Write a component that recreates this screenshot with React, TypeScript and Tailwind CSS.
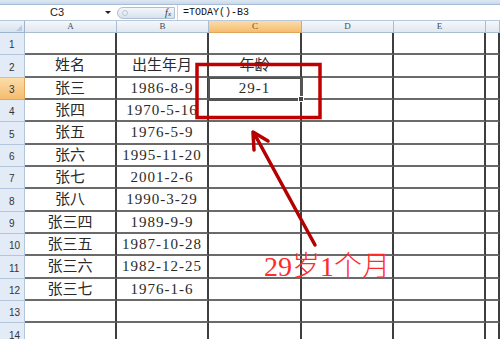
import React from 'react'

const rows: string[][] = [
  ['', '', ''],
  ['姓名', '出生年月', '年龄'],
  ['张三', '1986-8-9', '29-1'],
  ['张四', '1970-5-16', ''],
  ['张五', '1976-5-9', ''],
  ['张六', '1995-11-20', ''],
  ['张七', '2001-2-6', ''],
  ['张八', '1990-3-29', ''],
  ['张三四', '1989-9-9', ''],
  ['张三五', '1987-10-28', ''],
  ['张三六', '1982-12-25', ''],
  ['张三七', '1976-1-6', ''],
  ['', '', ''],
  ['', '', ''],
]

const cols = ['A', 'B', 'C', 'D', 'E', '']

const cellFont = { fontFamily: '"Liberation Serif", "Noto Sans CJK SC", serif' }

export default function App() {
  return (
    <div className="relative w-[500px] h-[339px] overflow-hidden bg-white">
      {/* ribbon edge */}
      <div className="h-[5px] bg-gradient-to-b from-[#dfe8f4] to-[#c9d8ea] border-b border-[#a7bcd6]" />

      {/* formula bar */}
      <div className="flex h-[16px] items-center border-b border-[#b7c8dc] bg-white">
        <div className="relative flex h-full w-[114px] items-center justify-center text-[11px] text-[#222]" style={{ fontFamily: '"Liberation Sans", sans-serif' }}>
          C3
          <span className="absolute right-[3px] top-[6px] h-0 w-0 border-x-[3px] border-t-[3px] border-x-transparent border-t-[#222]" />
        </div>
        <div className="ml-[3px] flex h-[12px] w-[58px] items-center justify-between rounded-l-full border border-[#aebfd3] bg-gradient-to-b from-[#f4f7fb] to-[#d7e1ec] pl-[4px] pr-[3px]">
          <span className="h-[6px] w-[6px] rounded-full border border-[#b9c6d5] bg-[#e9eef4]" />
          <span className="text-[10px] italic text-[#333]" style={{ fontFamily: '"Liberation Serif", serif' }}>
            f<span className="text-[7px]">x</span>
          </span>
        </div>
        <div className="ml-[2px] h-full border-l border-[#c7d3e1]" />
        <div className="ml-[5px] text-[10px] text-[#111]" style={{ fontFamily: '"Liberation Mono", monospace' }}>
          =TODAY()-B3
        </div>
      </div>

      {/* sheet */}
      <div className="grid grid-cols-[25px_92px_92px_93px_92px_92px_1fr]">
        {/* column headers */}
        <div className="relative h-[12px] border-r border-b border-[#9eb3cc] bg-gradient-to-b from-[#eef3f9] to-[#d9e3ef]">
          <span className="absolute bottom-[1px] right-[2px] h-0 w-0 border-b-[6px] border-l-[6px] border-b-[#bccbdc] border-l-transparent" />
        </div>
        {cols.map((c) => (
          <div
            key={c || 'F'}
            className={
              c === 'C'
                ? 'flex h-[12px] items-center justify-center border-r border-b border-[#e2a65a] bg-gradient-to-b from-[#fbdca8] to-[#f5bd6f] text-[9px] text-[#6b4a1c]'
                : 'flex h-[12px] items-center justify-center border-r border-b border-[#a9bdd4] bg-gradient-to-b from-[#f5f8fb] to-[#dfe7f0] text-[9px] text-[#3d4b60]'
            }
            style={{ fontFamily: '"Liberation Serif", serif' }}
          >
            {c}
          </div>
        ))}

        {rows.map((r, i) => (
          <React.Fragment key={i}>
            <div
              className={
                i === 2
                  ? 'flex h-[22.33px] items-end border-r border-b border-[#e2a65a] bg-gradient-to-b from-[#fbdca8] to-[#f5bd6f] pb-[2px] pl-[9px] text-[10px] text-[#333]'
                  : 'flex h-[22.33px] items-end border-r border-b border-[#b3c5db] bg-[#e3ebf6] pb-[2px] pl-[9px] text-[10px] text-[#333]'
              }
              style={{ fontFamily: '"Liberation Sans", sans-serif' }}
            >
              {i + 1}
            </div>
            {[0, 1, 2, 3, 4, 5].map((j) => {
              const text = j < 3 ? r[j] : ''
              const isNum = /^\d/.test(text)
              return (
                <div
                  key={j}
                  className={
                    i === 2 && j === 2
                      ? 'relative flex h-[22.33px] items-center justify-center border-r-2 border-b-2 border-[#505050] pt-[1px] text-[15px] leading-none text-[#2a2a2a] outline-2 outline-[#555] -outline-offset-1'
                      : 'flex h-[22.33px] items-center justify-center border-r-2 border-b-2 border-r-[#3e3e3e] border-b-[#6a6a6a] pt-[1px] text-[15px] leading-none text-[#2a2a2a]'
                  }
                  style={cellFont}
                >
                  <span className={isNum ? 'tracking-[1px]' : ''}>{text}</span>
                  {i === 2 && j === 2 && (
                    <span className="absolute -bottom-[4px] -right-[4px] h-[6px] w-[6px] border border-white bg-[#444]" />
                  )}
                </div>
              )
            })}
          </React.Fragment>
        ))}
      </div>

      {/* annotation */}
      <svg className="pointer-events-none absolute inset-0" width="500" height="339" viewBox="0 0 500 339">
        <rect x="197" y="64.5" width="123" height="53" fill="none" stroke="#c00000" strokeWidth="3.5" />
        <line x1="315" y1="245" x2="255" y2="135" stroke="#b40000" strokeWidth="3.5" strokeLinecap="round" />
        <polyline points="268,141 253,132 254,150" fill="none" stroke="#b40000" strokeWidth="3.5" strokeLinecap="round" strokeLinejoin="round" />
      </svg>
      <div
        className="absolute left-[264px] top-[253px] text-[28px] font-light leading-none text-[#ff2a2a]"
        style={cellFont}
      >
        29岁1个月
      </div>
    </div>
  )
}
